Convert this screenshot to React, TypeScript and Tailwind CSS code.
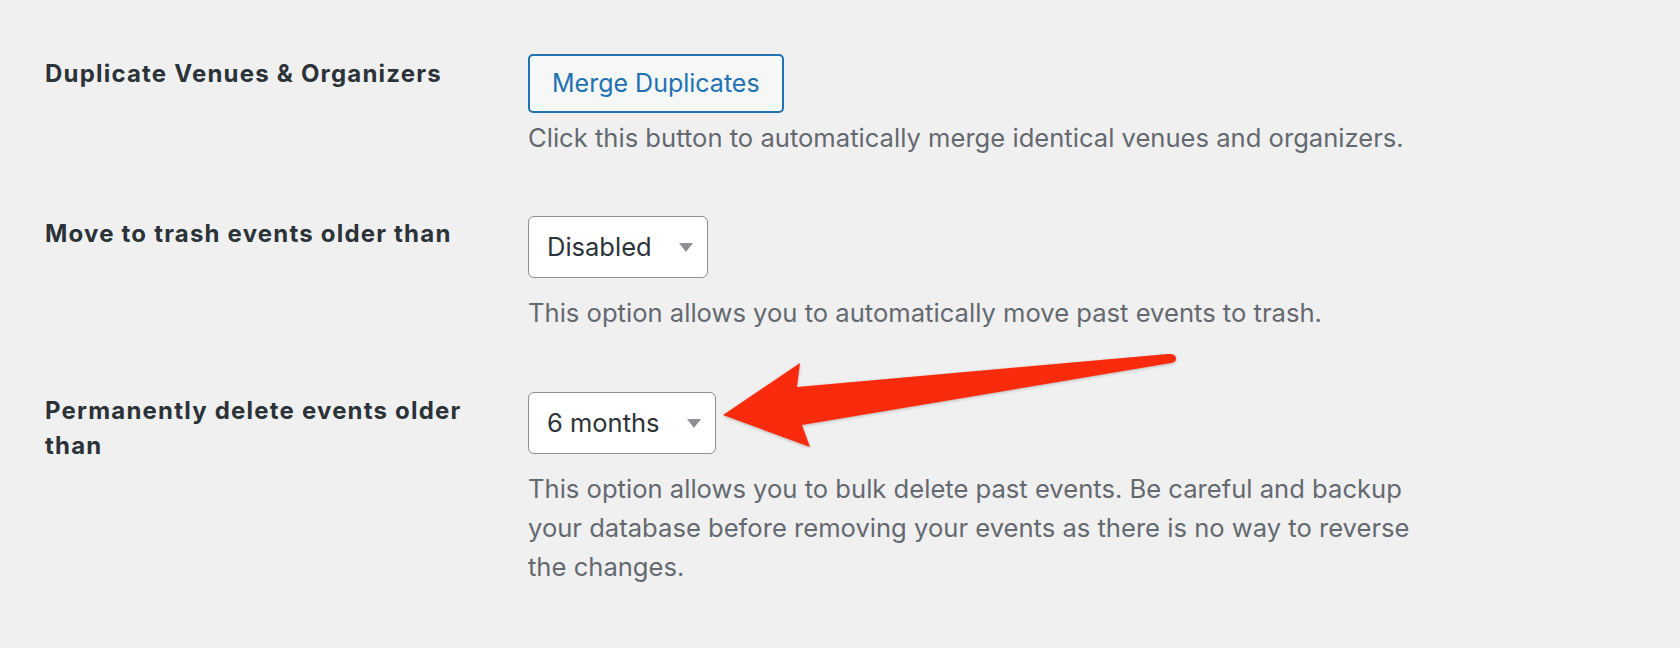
import React from 'react';

const FONT = {fontFamily: 'Inter, "Liberation Sans", sans-serif'};

function SelectBox({value}: {value: string}) {
  return (
    <div className="inline-flex h-[62px] items-center rounded-[6px] border-[1.5px] border-[#8c8f94] bg-white pl-[18px] pr-[14px] text-[25.5px] text-[#2c3338]">
      <span>{value}</span>
      <span className="ml-[27px] h-0 w-0 border-x-[7.5px] border-t-[9px] border-x-transparent border-t-[#8c8f94]" />
    </div>
  );
}

function Label({children, className = ''}: {children: React.ReactNode; className?: string}) {
  return (
    <div
      className={`w-[483px] shrink-0 text-[24px] font-bold leading-[35px] tracking-[1.2px] text-[#2c3338] ${className}`}
    >
      {children}
    </div>
  );
}

function Description({children, className = ''}: {children: React.ReactNode; className?: string}) {
  return (
    <p className={`text-[25.6px] leading-[39px] text-[#646970] ${className}`}>
      {children}
    </p>
  );
}

// Red annotation arrow pointing at the "Permanently delete" select
function Arrow() {
  return (
    <svg
      className="pointer-events-none absolute left-0 top-0"
      width="1680"
      height="648"
      viewBox="0 0 1680 648"
    >
      <defs>
        <filter id="shadow" x="-5%" y="-20%" width="110%" height="140%">
          <feDropShadow dx="0" dy="1" stdDeviation="1.5" floodColor="#000" floodOpacity="0.25" />
        </filter>
      </defs>
      <path
        d="M723 415 L800 363 L797 387 L1168 354 Q1176 353.5 1176 358.5 Q1176 363 1168 363.5 L802 425 L810 447 Z"
        fill="#fa2b0b"
        filter="url(#shadow)"
      />
    </svg>
  );
}

export default function App() {
  return (
    <div
      className="relative h-[648px] w-[1680px] overflow-hidden bg-[#f0f0f1] pl-[45px] pt-[54px]"
      style={FONT}
    >
      {/* Duplicate venues */}
      <div className="flex items-start">
        <Label className="mt-[2px]">Duplicate Venues &amp; Organizers</Label>
        <div>
          <button className="h-[59px] rounded-[5px] border-2 border-[#2271b1] bg-[#f6f7f7] px-[22px] text-[25px] text-[#2271b1]">
            Merge Duplicates
          </button>
          <Description className="mt-[5px]">
            Click this button to automatically merge identical venues and organizers.
          </Description>
        </div>
      </div>

      {/* Move to trash */}
      <div className="mt-[59px] flex items-start">
        <Label>Move to trash events older than</Label>
        <div>
          <SelectBox value="Disabled" />
          <Description className="mt-[15px]">
            This option allows you to automatically move past events to trash.
          </Description>
        </div>
      </div>

      {/* Permanently delete */}
      <div className="mt-[60px] flex items-start">
        <Label className="mt-[1px]">
          Permanently delete events older
          <br />
          than
        </Label>
        <div>
          <SelectBox value="6 months" />
          <Description className="mt-[15px]">
            This option allows you to bulk delete past events. Be careful and backup
            <br />
            your database before removing your events as there is no way to reverse
            <br />
            the changes.
          </Description>
        </div>
      </div>

      <Arrow />
    </div>
  );
}
